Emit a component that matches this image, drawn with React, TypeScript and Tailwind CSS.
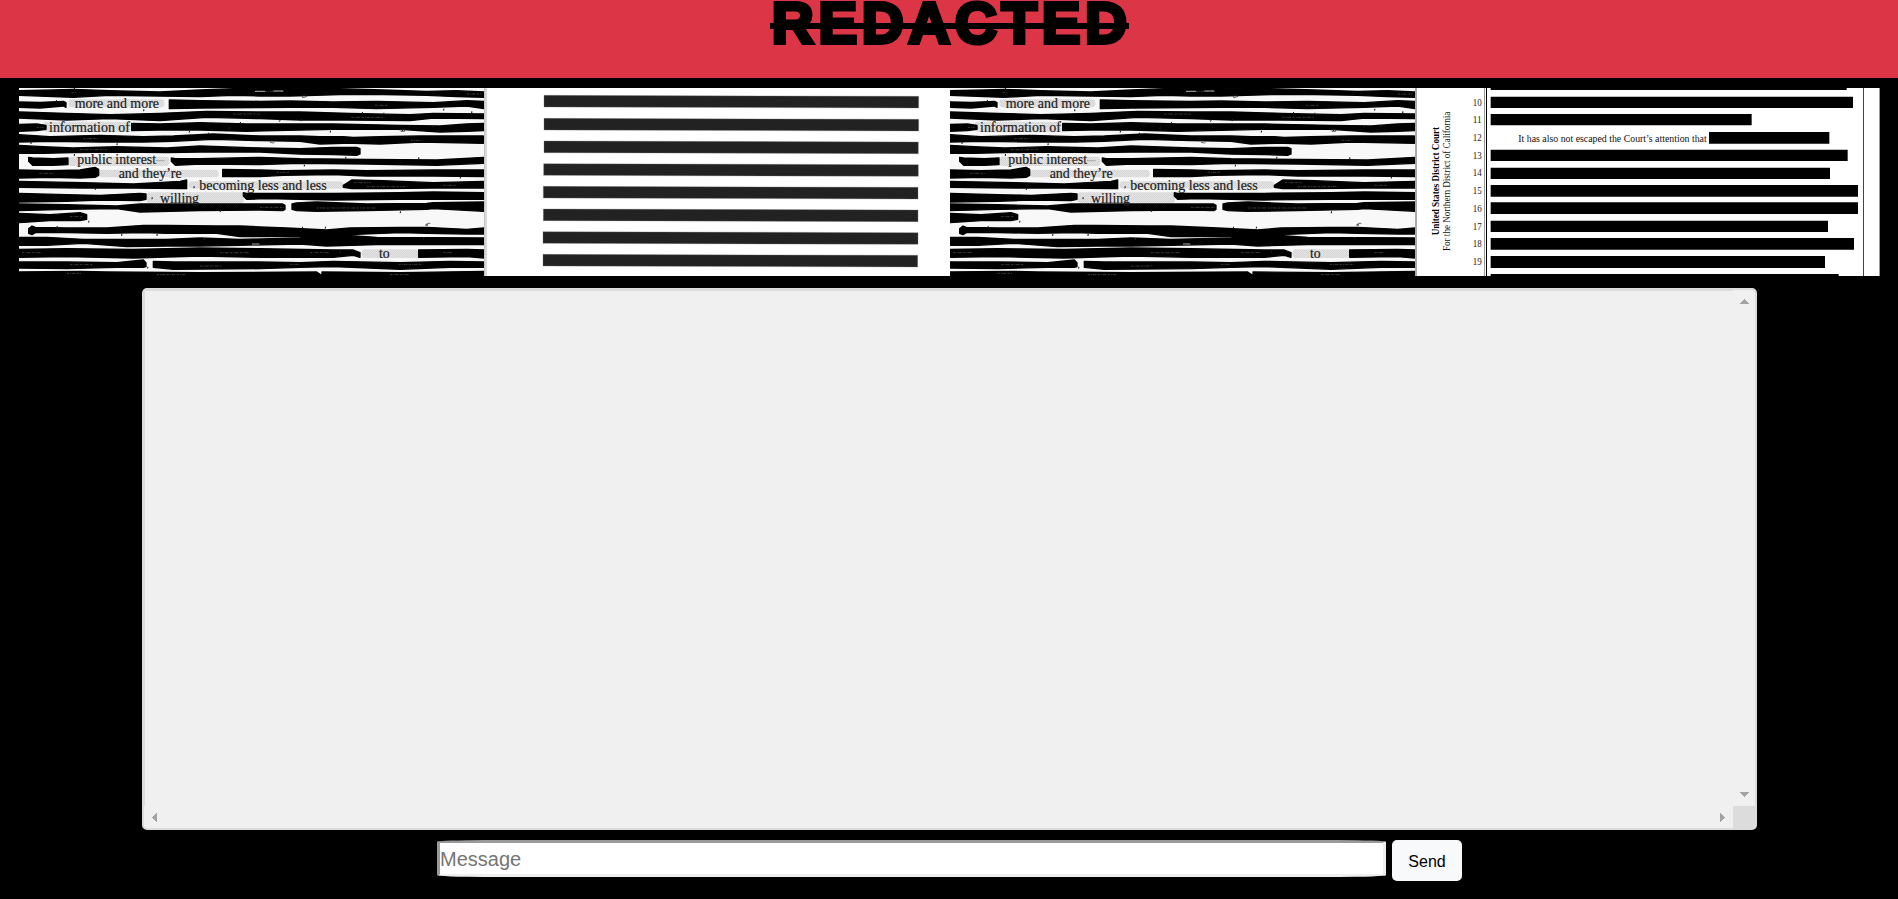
import React from "react";

type Sample = [x: number, top: number, bottom: number];

const strokes: Sample[][] = [
  [[57,62,76],[160,60,80],[220,58,82],[330,62,76],[480,66,78],[600,60,80],[700,56,76],[780,54,78],[870,54,78],[1020,56,74],[1150,60,74],[1280,64,76],[1370,62,80],[1452,66,82]],
  [[57,96,112],[120,97,114],[190,94,108],[198,98,112]],
  [[508,90,116],[600,92,114],[780,94,113],[870,93,112],[1000,96,112],[1130,94,116],[1300,98,112],[1400,92,108],[1452,94,116]],
  [[57,126,144],[200,130,150],[330,134,146],[480,130,152],[620,124,142],[780,126,146],[900,126,150],[1050,130,150],[1230,134,152],[1300,130,144],[1452,132,146]],
  [[57,163,184],[110,162,182],[138,166,178]],
  [[395,160,182],[480,162,180],[600,158,180],[740,162,184],[1000,162,178],[1200,166,178],[1320,168,186],[1400,162,184],[1452,160,182]],
  [[57,194,216],[150,200,214],[300,196,216],[430,200,216],[520,198,214],[640,192,208],[780,198,212],[900,198,214],[960,200,222],[1030,200,220],[1060,202,220],[1140,200,222],[1260,198,216],[1450,198,220]],
  [[57,226,250],[130,230,250],[220,234,248],[350,230,246],[500,234,248],[600,228,246],[780,234,246],[900,236,252],[1000,232,254],[1070,232,256],[1080,236,252]],
  [[86,262,274],[98,264,286],[160,266,286],[204,264,284]],
  [[514,264,274],[526,266,286],[600,266,282],[780,262,284],[900,266,280],[1100,268,282],[1310,270,286],[1452,262,280]],
  [[57,300,324],[150,302,322],[240,300,324],[285,292,322],[296,298,316]],
  [[668,298,320],[780,300,320],[850,302,316],[1000,300,314],[1100,302,318],[1300,300,318],[1452,300,320]],
  [[57,334,352],[250,338,354],[400,342,354],[540,334,356],[560,330,356]],
  [[1030,346,352],[1055,330,356],[1150,332,356],[1300,338,354],[1452,334,354]],
  [[57,370,396],[200,374,394],[300,376,390],[420,370,392],[438,372,388]],
  [[730,368,378],[740,370,388],[800,370,386],[1000,370,390],[1200,368,388],[1300,366,388],[1452,368,388]],
  [[57,402,422],[200,404,418],[350,408,416],[420,402,426],[600,402,422],[780,402,420],[848,402,422],[855,406,418]],
  [[876,402,418],[890,399,422],[950,396,424],[1100,402,422],[1280,400,418],[1300,398,416],[1452,396,424]],
  [[57,430,458],[150,434,452],[240,428,452],[260,434,448]],
  [[86,476,490],[96,468,494],[106,472,488],[200,474,488],[320,474,490],[430,466,488],[500,466,490],[650,468,490],[720,468,500],[860,474,500],[980,480,502],[1050,474,494],[1200,472,488],[1280,472,490],[1400,478,492],[1452,474,492]],
  [[57,502,526],[140,502,526],[250,508,520],[380,508,530],[500,508,528],[600,504,528],[720,508,526],[900,504,522],[980,492,528],[1130,502,524],[1452,504,524]],
  [[57,538,562],[200,536,560],[400,538,564],[600,534,558],[780,536,562],[1000,540,562],[1060,540,556],[1080,548,562]],
  [[1256,540,562],[1400,538,560],[1452,540,564]],
  [[57,576,594],[200,576,596],[350,578,592],[430,570,592],[438,578,590]],
  [[460,574,592],[520,576,598],[780,576,596],[900,578,592],[1000,574,590],[1200,578,598],[1350,574,592],[1452,576,592]],
  [[57,606,618],[240,604,618],[320,606,618],[600,608,618],[950,606,618],[965,616,618]],
  [[966,606,618],[1200,608,618],[1452,604,618]],
];

const strokePath = (samples: Sample[]) => {
  const top = samples.map(([x, y]) => `${x},${y}`);
  const bottom = [...samples].reverse().map(([x, , y]) => `${x},${y}`);
  return `M${top.concat(bottom).join("L")}Z`;
};

const patches: [number, number, number, number][] = [
  [205, 88, 288, 24],
  [130, 155, 262, 30],
  [206, 260, 302, 28],
  [296, 299, 360, 23],
  [566, 334, 464, 22],
  [440, 367, 292, 33],
  [1085, 538, 170, 26],
];

const words: [string, number, number, number][] = [
  ["more and more", 224, 115, 253],
  ["information of", 147, 186, 243],
  ["public interest", 232, 283, 236],
  ["and they’re", 356, 324, 189],
  ["becoming less and less", 598, 360, 382],
  ["willing", 480, 398, 117],
  ["to", 1137, 565, 32],
];

const specks: [number, number][] = [
  [222, 54], [168, 90], [430, 118], [92, 216], [350, 220], [567, 182], [686, 172], [624, 188], [285, 354], [581, 349],
  [455, 382], [265, 452], [470, 492], [364, 492], [170, 468], [612, 504], [442, 590], [903, 148], [990, 182], [1206, 178],
  [1330, 116], [1086, 126], [912, 284], [1036, 260], [1255, 262], [1380, 320], [1200, 424], [975, 470], [906, 470], [1270, 502],
  [868, 92], [1414, 124], [1348, 164], [1298, 166], [720, 156], [222, 252], [660, 420], [1150, 128], [1020, 542], [1280, 462],
];

const scratches: [number, number, number][] = [
  [214, 68, 16], [110, 172, 22], [250, 206, 44], [240, 239, 80], [118, 310, 44], [210, 440, 40], [700, 132, 80], [765, 64, 85],
  [1125, 106, 38], [1054, 142, 94], [1232, 211, 32], [830, 307, 38], [1062, 338, 50], [1100, 350, 122], [780, 412, 74], [950, 414, 180],
  [600, 588, 64], [1196, 583, 72], [870, 583, 26], [660, 548, 90], [66, 548, 60], [470, 614, 90], [1170, 614, 60], [1400, 72, 46],
  [1330, 346, 40], [210, 584, 70], [1330, 548, 28], [930, 548, 60], [200, 610, 44],
];

function MarkerPage({ id }: { id: string }) {
  return (
    <svg viewBox="57 54 1395 564" preserveAspectRatio="none" className="block h-full w-full bg-[#f8f8f8]">
      <defs>
        <pattern id={`${id}-hatch`} width="6" height="6" patternUnits="userSpaceOnUse">
          <rect width="6" height="6" fill="#e5e5e5" />
          <path d="M0 6 6 0" stroke="#bdbdbd" strokeWidth="1.3" />
        </pattern>
        <filter id={`${id}-rough`} x="0" y="-10%" width="100%" height="120%">
          <feTurbulence type="fractalNoise" baseFrequency="0.05 0.12" numOctaves="2" seed="7" />
          <feDisplacementMap in="SourceGraphic" scale="3" xChannelSelector="R" yChannelSelector="G" />
        </filter>
      </defs>
      {patches.map(([x, y, w, h]) => (
        <rect key={`${x}-${y}`} x={x} y={y} width={w} height={h} rx="10" fill={`url(#${id}-hatch)`} />
      ))}
      <g filter={`url(#${id}-rough)`}>
        {strokes.map((s, i) => (
          <path key={i} d={strokePath(s)} fill="#040406" stroke="#040406" strokeWidth="4" strokeLinejoin="round" />
        ))}
      </g>
      {specks.map(([x, y]) => (
        <path key={`${x}-${y}`} d={`M${x} ${y}l3 0 0 5-4 1z`} fill="#222" />
      ))}
      {scratches.map(([x, y, w]) => (
        <path key={`${x}-${y}`} d={`M${x} ${y}h${w}`} stroke="#55555c" strokeWidth="2" strokeDasharray="7 3 3 2 11 4" />
      ))}
      <path d="M468 272h26M756 522h22M765 64h30M820 63h30" stroke="#aaa" strokeWidth="3" />
      <path d="M906 76l12-2 2 6-12 3zM1200 182v-4h14v6h-12M1275 466l8-6h8M810 217l10 2 4-3M835 150h6l-3 6" stroke="#222" strokeWidth="2" fill="none" />
      {words.map(([text, x, y, w]) => (
        <text key={text} x={x} y={y} textLength={w} lengthAdjust="spacingAndGlyphs" fill="#1c1c1c" stroke="#1c1c1c" strokeWidth="0.6" fontSize="42" className="font-['Liberation_Serif',serif]">
          {text}
        </text>
      ))}
    </svg>
  );
}

const stripes: [number, number, number, number][] = [
  // left, top-left, right, top-right
  [192, 76, 1316, 79],
  [192, 145, 1316, 148],
  [192, 213, 1315, 216],
  [191, 281, 1315, 284],
  [190, 349, 1314, 352],
  [190, 417, 1314, 420],
  [189, 485, 1314, 488],
  [189, 553, 1313, 556],
];

function StripedPage() {
  return (
    <svg viewBox="12 54 1398 564" preserveAspectRatio="none" className="block h-full w-full bg-white">
      <path d="M12 54h9v564h-9z" fill="#dadada" />
      <path d="M12 54h3v564h-3z" fill="#c4c4c4" />
      {stripes.map(([l, tl, r, tr]) => (
        <path key={tl} d={`M${l} ${tl}L${r} ${tr}V${tr + 35}L${l} ${tl + 35}Z`} fill="#222" stroke="#777" strokeWidth="1" />
      ))}
    </svg>
  );
}

const courtBars: [number, number, number, number][] = [
  [272, 50, 1340, 60],
  [272, 80, 1359, 114],
  [272, 132, 1055, 166],
  [927, 186, 1288, 221],
  [272, 239, 1343, 273],
  [272, 293, 1290, 327],
  [272, 345, 1374, 380],
  [272, 397, 1374, 432],
  [272, 452, 1284, 486],
  [272, 504, 1362, 539],
  [272, 558, 1275, 594],
  [272, 612, 1316, 622],
];

const lineNumbers: [number, number][] = [
  [10, 108], [11, 160], [12, 214], [13, 267], [14, 319], [15, 372], [16, 425], [17, 480], [18, 532], [19, 586],
];

function CourtPage() {
  return (
    <svg viewBox="45 54 1395 564" preserveAspectRatio="none" className="block h-full w-full bg-white font-['Liberation_Serif',serif]">
      <g shapeRendering="crispEdges">
        <path d="M45 54h6v564h-6z" fill="#aaa" />
        <path d="M252 54h3v564h-3z" fill="#999" />
        <path d="M258 54h3v564h-3z" fill="#000" />
        <path d="M1389 54h3v564h-3z" fill="#444" />
        <path d="M1437 54h3v564h-3z" fill="#999" />
      </g>
      {courtBars.map(([x0, y0, x1, y1]) => (
        <path key={y0} d={`M${x0} ${y0}H${x1}V${y1}H${x0}Z`} fill="#000" />
      ))}
      {lineNumbers.map(([n, y]) => (
        <text key={n} x="218" y={y} fontSize="29" textLength="27" lengthAdjust="spacingAndGlyphs" fill="#222">
          {n}
        </text>
      ))}
      <text x="355" y="215" fontSize="29" textLength="565" lengthAdjust="spacingAndGlyphs" fill="#111">
        It has also not escaped the Court’s attention that
      </text>
      <text transform="translate(118 496) rotate(-90)" fontSize="28" fontWeight="700" textLength="325" lengthAdjust="spacingAndGlyphs" fill="#000">
        United States District Court
      </text>
      <text transform="translate(149 543) rotate(-90)" fontSize="29" textLength="418" lengthAdjust="spacingAndGlyphs" fill="#111">
        For the Northern District of California
      </text>
    </svg>
  );
}

function Arrow({ d }: { d: string }) {
  return (
    <svg viewBox="0 0 10 10" className="block h-2.5 w-2.5" shapeRendering="crispEdges">
      <path d={d} fill="#a3a3a3" />
    </svg>
  );
}

function MessageLog() {
  return (
    <section className="mt-3 ml-[142px] flex h-[542px] w-[1615px] flex-col overflow-hidden rounded-[5px] border-2 border-[#dcdcdc] bg-[#f0f0f0]">
      <div className="flex flex-1">
        <div className="flex-1 border-t border-l border-[#dcdcdc]" />
        <div className="flex w-[22px] flex-col items-end justify-between pt-[7px] pr-[5px] pb-[7px]">
          <Arrow d="M0 7h9v-1h-1v-1h-1v-1h-1v-1h-1v-1h-1v1h-1v1h-1v1h-1v1h-1z" />
          <Arrow d="M0 3h9v1h-1v1h-1v1h-1v1h-1v1h-1v-1h-1v-1h-1v-1h-1v-1h-1z" />
        </div>
      </div>
      <div className="flex h-[22px]">
        <div className="flex flex-1 items-end justify-between px-[6px] pb-[5px]">
          <Arrow d="M7 0v9h-1v-1h-1v-1h-1v-1h-1v-1h-1v-1h1v-1h1v-1h1v-1h1v-1z" />
          <Arrow d="M3 0v9h1v-1h1v-1h1v-1h1v-1h1v-1h-1v-1h-1v-1h-1v-1h-1v-1z" />
        </div>
        <div className="w-[22px] bg-[#dcdcdc]" />
      </div>
    </section>
  );
}

export default function App() {
  return (
    <main className="h-[899px] overflow-hidden bg-black font-['Liberation_Sans',Arial,sans-serif]">
      <header className="flex h-[78px] bg-[#dc3545] pl-[770px]">
        <h1 className="flex h-[45px] w-[359px] items-start">
          <svg viewBox="0 0 359 48" className="block h-12 w-[359px] overflow-visible">
            <text x="1.8" y="43" letterSpacing="4.7" fontSize="58" fontWeight="700" fill="#000" stroke="#000" strokeWidth="4" strokeLinejoin="miter">
              REDACTED
            </text>
            <path d="M0 23h359v6H0z" />
          </svg>
        </h1>
      </header>
      <div className="mt-2.5 ml-[19px] grid h-[188px] w-[1861px] grid-cols-[465px_466px_465px_465px]">
        <MarkerPage id="left" />
        <StripedPage />
        <MarkerPage id="right" />
        <CourtPage />
      </div>
      <MessageLog />
      <form className="mt-2.5 ml-[437px] flex items-start gap-1.5" onSubmit={(e) => e.preventDefault()}>
        <input
          type="text"
          placeholder="Message"
          className="h-[37px] w-[949px] rounded-[5%] border-3 border-t-[#9a9a9a] border-r-[#eeeeee] border-b-[#eeeeee] border-l-[#9a9a9a] bg-white p-0 pt-0.5 text-xl placeholder:text-[#757575]"
        />
        <button type="submit" className="h-[41px] w-[70px] rounded-[5px] bg-[#f8f9fa] pt-0.5 text-base text-black">
          Send
        </button>
      </form>
    </main>
  );
}
